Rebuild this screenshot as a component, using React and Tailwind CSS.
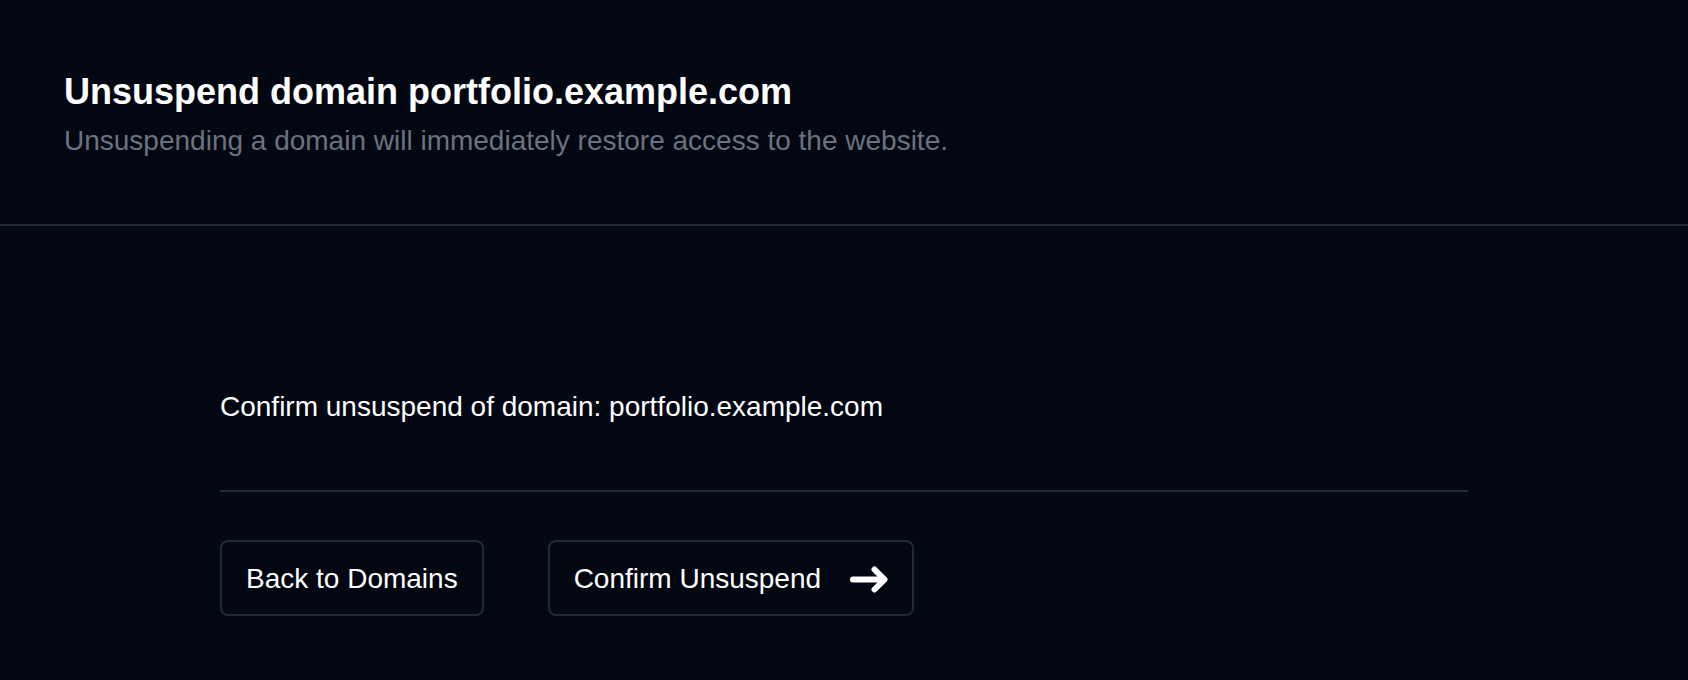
export default function App() {
  return (
    <div className="min-h-[680px] w-full bg-[#030712] text-white" style={{ fontFamily: '"Liberation Sans", Arial, sans-serif' }}>
      <header className="border-b-2 border-[#1f2937] px-16 pt-[72px] pb-[62px]">
        <h1 className="text-4xl font-bold text-white">Unsuspend domain portfolio.example.com</h1>
        <p className="mt-2 text-[28px] leading-normal text-[#6b7280]">
          Unsuspending a domain will immediately restore access to the website.
        </p>
      </header>
      <main className="pt-[160px]">
        <div className="mx-auto max-w-7xl px-4">
          <p className="text-[28px] leading-normal text-white">Confirm unsuspend of domain: portfolio.example.com</p>
          <div className="mt-[62px] border-b-2 border-[#1f2937]"></div>
          <div className="mt-[48px] flex items-center gap-16">
            <button className="rounded-lg border-2 border-[#1f2937] px-6 pt-4 pb-[14px] text-[28px] leading-normal text-white">
              Back to Domains
            </button>
            <button className="flex items-center gap-[29px] rounded-lg border-2 border-[#1f2937] px-6 pt-4 pb-[14px] text-[28px] leading-normal text-white">
              <span>Confirm Unsuspend</span>
              <svg width="38" height="27" viewBox="0 0 38 27" fill="none" stroke="currentColor" strokeWidth="6" strokeLinecap="round" strokeLinejoin="round">
                <path d="M3 13.5H34" />
                <path d="M24.5 3.5L34.5 13.5L24.5 23.5" />
              </svg>
            </button>
          </div>
        </div>
      </main>
    </div>
  );
}
